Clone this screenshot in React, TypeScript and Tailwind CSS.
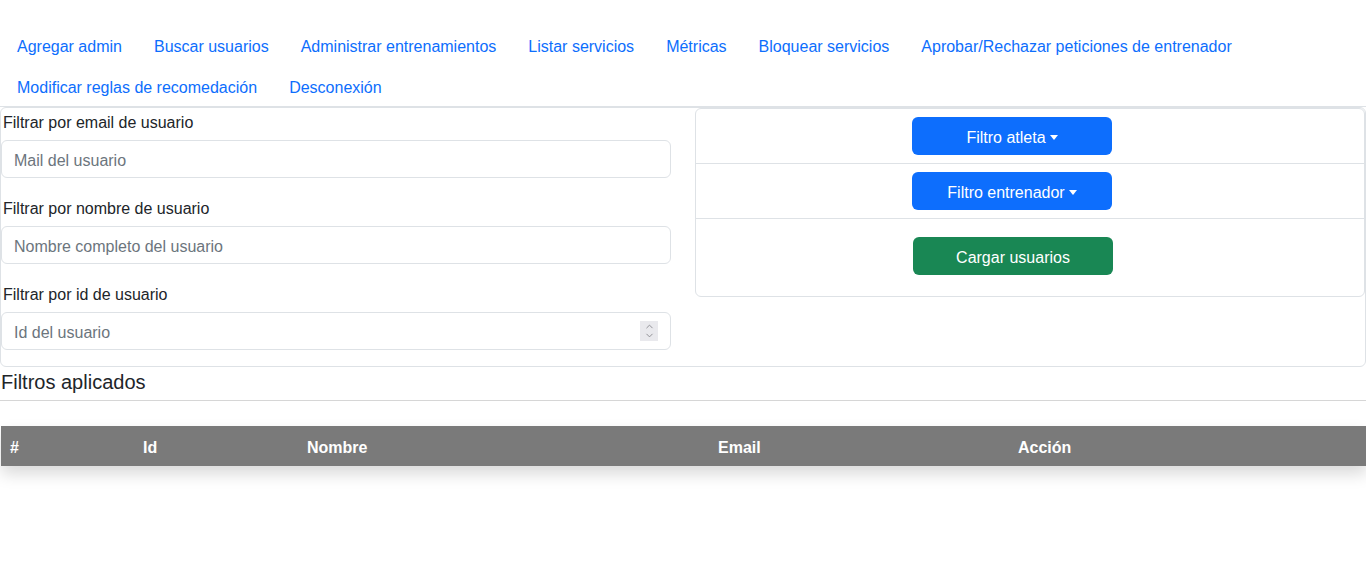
import { ChevronUp, ChevronDown } from "lucide-react";

const links = [
  "Agregar admin",
  "Buscar usuarios",
  "Administrar entrenamientos",
  "Listar servicios",
  "Métricas",
  "Bloquear servicios",
  "Aprobar/Rechazar peticiones de entrenador",
  "Modificar reglas de recomedación",
  "Desconexión",
];

function Field({ label, placeholder, spinner }: { label: string; placeholder: string; spinner?: boolean }) {
  return (
    <div className="mb-4">
      <label className="block mb-2 pl-[2px] pt-[5px] text-[16px] leading-[19px] text-[#212529]">{label}</label>
      <div className="relative">
        <input
          type="text"
          placeholder={placeholder}
          className="block w-full h-[38px] px-3 pt-1 rounded-md border border-[#dee2e6] bg-white text-[16px] text-[#212529] placeholder:text-[#6c757d] outline-none"
        />
        {spinner && (
          <div className="absolute right-[13px] top-[9px] w-[18px] h-[20px] bg-[#e9e9ed] flex flex-col items-center justify-center text-[#8a8a8f]">
            <ChevronUp size={11} strokeWidth={2} className="-mb-[1px]" />
            <ChevronDown size={11} strokeWidth={2} className="-mt-[1px]" />
          </div>
        )}
      </div>
    </div>
  );
}

function Caret() {
  return <span className="inline-block ml-[4px] align-[3px] border-t-[5px] border-t-white border-x-[4px] border-x-transparent" />;
}

export default function App() {
  return (
    <div className="min-h-[583px] bg-white font-['Liberation_Sans',Arial,sans-serif] text-[#212529]">
      <nav className="pt-[25px] pl-[1px] flex flex-wrap gap-y-px border-b border-[#dee2e6]">
        {links.map((l) => (
          <a key={l} href="#" className="px-4 pt-[10px] pb-[6px] text-[16px] leading-6 text-[#0d6efd]">
            {l}
          </a>
        ))}
      </nav>

      <div className="border border-[#dee2e6] rounded-md grid grid-cols-2">
        <div className="pr-3 pt-0">
          <Field label="Filtrar por email de usuario" placeholder="Mail del usuario" />
          <Field label="Filtrar por nombre de usuario" placeholder="Nombre completo del usuario" />
          <Field label="Filtrar por id de usuario" placeholder="Id del usuario" spinner />
        </div>
        <div className="pl-3 self-start">
          <div className="border border-[#dee2e6] rounded-md">
            <div className="py-2 pl-[216px] border-b border-[#dee2e6]">
              <button className="w-[200px] h-[38px] pt-1 rounded-md bg-[#0d6efd] text-white text-[16px]">
                Filtro atleta
                <Caret />
              </button>
            </div>
            <div className="py-2 pl-[216px] border-b border-[#dee2e6]">
              <button className="w-[200px] h-[38px] pt-1 rounded-md bg-[#0d6efd] text-white text-[16px]">
                Filtro entrenador
                <Caret />
              </button>
            </div>
            <div className="pt-[18px] pb-[21px] pl-[217px]">
              <button className="w-[200px] h-[38px] pt-1 rounded-md bg-[#198754] text-white text-[16px]">Cargar usuarios</button>
            </div>
          </div>
        </div>
      </div>

      <h5 className="pl-[1px] mt-[3px] text-[20px] leading-6">Filtros aplicados</h5>
      <hr className="mt-[6px] border-t border-[#d6d6d6]" />

      <table className="mt-[25px] w-full ml-[1px] shadow-[0_8px_16px_rgba(0,0,0,0.15)]">
        <thead>
          <tr className="bg-[#7a7a7a] text-white text-[16px] font-bold h-[40px] text-left">
            <th className="pl-[9px] pt-1 w-[142px]">#</th>
            <th className="pt-1 w-[164px]">Id</th>
            <th className="pt-1 w-[411px]">Nombre</th>
            <th className="pt-1 w-[300px]">Email</th>
            <th className="pt-1">Acción</th>
          </tr>
        </thead>
      </table>
    </div>
  );
}
